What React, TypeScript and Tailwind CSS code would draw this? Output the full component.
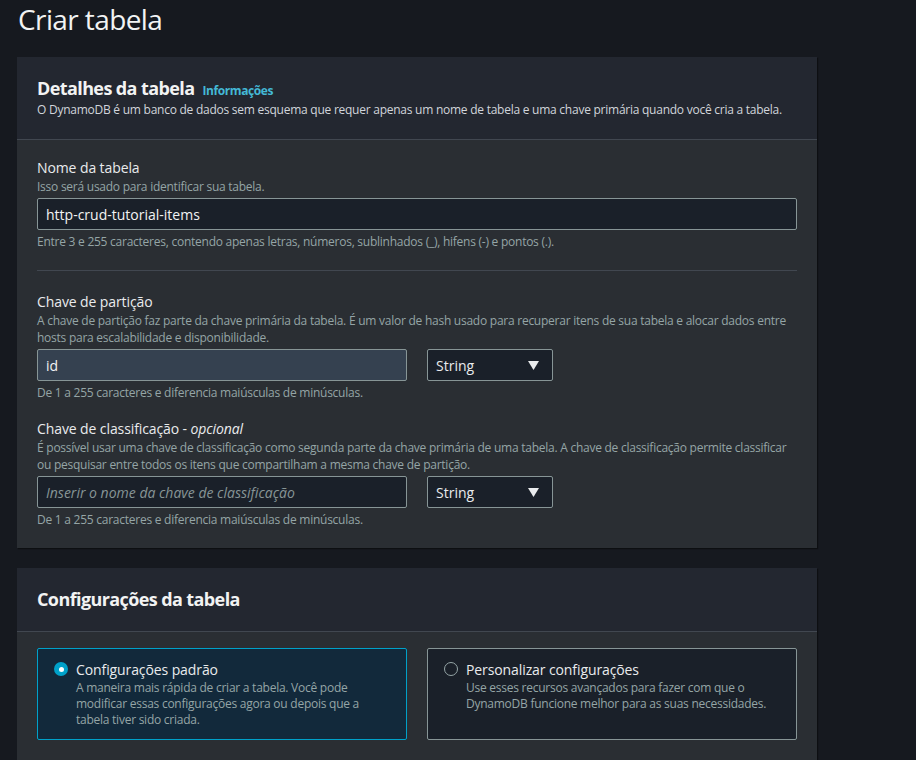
import React from 'react';

const font = { fontFamily: '"Open Sans", "Noto Sans", sans-serif' };

function Field({
  label,
  optional,
  desc,
  hint,
  children,
}: {
  label: string;
  optional?: boolean;
  desc: React.ReactNode;
  hint: string;
  children: React.ReactNode;
}) {
  return (
    <div>
      <div className="text-[14px] leading-[20px] tracking-[-0.1px] text-[#e9ebed]">
        {label}
        {optional && (
          <>
            {' - '}
            <i>opcional</i>
          </>
        )}
      </div>
      <div className="text-[12px] leading-[17px] tracking-[-0.25px] text-[#95a5a6]">{desc}</div>
      <div className="mt-[3px]">{children}</div>
      <div className="mt-[4px] text-[12px] leading-[16px] tracking-[-0.25px] text-[#95a5a6]">{hint}</div>
    </div>
  );
}

function TypeSelect() {
  return (
    <div className="flex h-[32px] w-[126px] items-center justify-between rounded-[2px] border border-[#879596] bg-[#1a2029] pl-[8px] pr-[13px] text-[14px] text-[#e9ebed]">
      <span>String</span>
      <svg width="11" height="9" viewBox="0 0 11 9">
        <path d="M0 0h11L5.5 9z" fill="#e9ebed" />
      </svg>
    </div>
  );
}

function Radio({ checked }: { checked?: boolean }) {
  if (checked) {
    return (
      <span className="mt-[3px] flex h-[14px] w-[14px] shrink-0 items-center justify-center rounded-full bg-[#00a1c9]">
        <span className="h-[5px] w-[5px] rounded-full bg-white" />
      </span>
    );
  }
  return <span className="mt-[3px] h-[14px] w-[14px] shrink-0 rounded-full border-[1.5px] border-[#95a5a6]" />;
}

function Tile({ checked, title, desc }: { checked?: boolean; title: string; desc: string }) {
  return (
    <div
      className={
        checked
          ? 'flex h-[92px] gap-[8px] rounded-[2px] border border-[#00a1c9] bg-[#12293b] pl-[16px] pr-[20px] pt-[10px]'
          : 'flex h-[92px] gap-[8px] rounded-[2px] border border-[#879596] bg-[#1a2029] pl-[16px] pr-[20px] pt-[10px]'
      }
    >
      <Radio checked={checked} />
      <div>
        <div className="text-[14px] leading-[21px] tracking-[-0.1px] text-[#e9ebed]">{title}</div>
        <div className="text-[12px] leading-[16px] tracking-[-0.25px] text-[#95a5a6]">{desc}</div>
      </div>
    </div>
  );
}

export default function App() {
  return (
    <div className="min-h-[760px] bg-[#16191f] pb-10" style={font}>
      <h1 className="pl-[18px] pt-[1px] text-[28px] leading-[36px] tracking-[-0.6px] text-[#f2f3f3]">Criar tabela</h1>

      <div className="ml-[17px] mt-[20px] w-[800px] bg-[#2a2e33] shadow-[1px_1px_1px_#0d0f12]">
        <div className="border-b border-[#414750] bg-[#232730] px-[20px] pb-[21px] pt-[20px]">
          <div className="flex items-baseline gap-[8px]">
            <h2 className="text-[18px] font-bold leading-[22px] tracking-[-0.6px] text-[#f2f3f3]">Detalhes da tabela</h2>
            <span className="text-[12px] font-bold tracking-[-0.4px] text-[#44b9d6]">Informações</span>
          </div>
          <p className="mt-[2px] text-[12px] leading-[16px] tracking-[-0.25px] text-[#d1d5db]">
            O DynamoDB é um banco de dados sem esquema que requer apenas um nome de tabela e uma chave primária quando você cria a tabela.
          </p>
        </div>

        <div className="px-[20px] pb-[20px] pt-[18px]">
          <Field
            label="Nome da tabela"
            desc="Isso será usado para identificar sua tabela."
            hint="Entre 3 e 255 caracteres, contendo apenas letras, números, sublinhados (_), hifens (-) e pontos (.)."
          >
            <div className="flex h-[32px] items-center rounded-[2px] border border-[#879596] bg-[#1a2029] px-[8px] text-[14px] text-[#f2f3f3]">
              http-crud-tutorial-items
            </div>
          </Field>

          <div className="mb-[21px] mt-[20px] h-px bg-[#414750]" />

          <Field
            label="Chave de partição"
            desc="A chave de partição faz parte da chave primária da tabela. É um valor de hash usado para recuperar itens de sua tabela e alocar dados entre hosts para escalabilidade e disponibilidade."
            hint="De 1 a 255 caracteres e diferencia maiúsculas de minúsculas."
          >
            <div className="flex gap-[20px]">
              <div className="flex h-[32px] w-[370px] items-center rounded-[2px] border border-[#879596] bg-[#354150] px-[8px] text-[14px] text-[#f2f3f3]">
                id
              </div>
              <TypeSelect />
            </div>
          </Field>

          <div className="mt-[18px]">
            <Field
              label="Chave de classificação"
              optional
              desc="É possível usar uma chave de classificação como segunda parte da chave primária de uma tabela. A chave de classificação permite classificar ou pesquisar entre todos os itens que compartilham a mesma chave de partição."
              hint="De 1 a 255 caracteres e diferencia maiúsculas de minúsculas."
            >
              <div className="flex gap-[20px]">
                <div className="flex h-[32px] w-[370px] items-center rounded-[2px] border border-[#879596] bg-[#1a2029] px-[8px] text-[14px] italic text-[#879596]">
                  Inserir o nome da chave de classificação
                </div>
                <TypeSelect />
              </div>
            </Field>
          </div>
        </div>
      </div>

      <div className="ml-[17px] mt-[20px] w-[800px] bg-[#2a2e33] shadow-[1px_1px_1px_#0d0f12]">
        <div className="border-b border-[#414750] bg-[#232730] px-[20px] pb-[21px] pt-[20px]">
          <h2 className="text-[18px] font-bold leading-[22px] tracking-[-0.6px] text-[#f2f3f3]">Configurações da tabela</h2>
        </div>
        <div className="grid grid-cols-2 gap-[20px] px-[20px] pb-[20px] pt-[16px]">
          <Tile
            checked
            title="Configurações padrão"
            desc="A maneira mais rápida de criar a tabela. Você pode modificar essas configurações agora ou depois que a tabela tiver sido criada."
          />
          <Tile
            title="Personalizar configurações"
            desc="Use esses recursos avançados para fazer com que o DynamoDB funcione melhor para as suas necessidades."
          />
        </div>
      </div>
    </div>
  );
}
